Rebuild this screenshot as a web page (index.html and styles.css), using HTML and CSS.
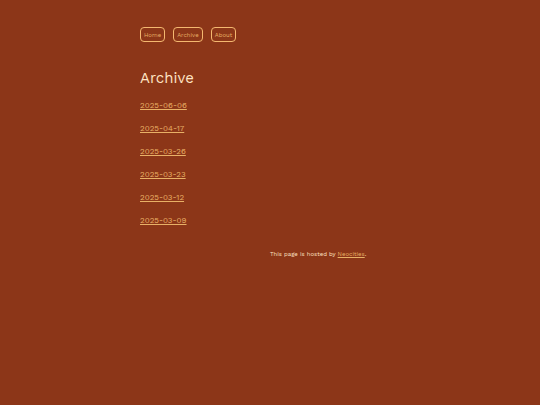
FILE: index.html
```html
<!DOCTYPE html>
<html lang="en">
<head>
    <meta charset="UTF-8">
    <meta name="viewport" content="width=device-width, initial-scale=1.0">
    <title>Archive</title>
    <link rel="stylesheet" href="styles.css">
</head>
<body>
    <div class="container">
        <nav class="menu">
            <a href="index.html">Home</a>
            <a href="archive.html">Archive</a>
            <a href="about.html">About</a>
        </nav>

        <main>
            <h1>Archive</h1>
            <ul class="entries">
                <li><a href="2025-06-06.html">2025-06-06</a></li>
                <li><a href="2025-04-17.html">2025-04-17</a></li>
                <li><a href="2025-03-26.html">2025-03-26</a></li>
                <li><a href="2025-03-23.html">2025-03-23</a></li>
                <li><a href="2025-03-12.html">2025-03-12</a></li>
                <li><a href="2025-03-09.html">2025-03-09</a></li>
            </ul>
        </main>
    </div>

    <footer>This page is hosted by <a href="https://neocities.org">Neocities</a>.</footer>
</body>
</html>
```

FILE: styles.css
```css
body {
    margin: 0;
    padding: 27px 20px;
    background-color: #8c3618;
    color: #ffe4c4;
    font-family: "Work Sans", Inter, sans-serif;
    font-size: 8px;
    font-variant-numeric: lining-nums;
}

a {
    color: #e8b066;
}

.container {
    max-width: 260px;
    margin: 0 auto;
}

.menu {
    display: flex;
    gap: 8px;
}

.menu a {
    padding: 0 3px;
    border: 1px solid #f4b870;
    border-radius: 4px;
    font-size: 6px;
    line-height: 13px;
    text-decoration: none;
}

h1 {
    margin: 26px 0 13px;
    font-size: 15px;
    font-weight: 400;
    line-height: 20px;
}

.entries {
    display: grid;
    gap: 13px;
    margin: 0;
    padding: 0;
    list-style: none;
    line-height: 10px;
}

footer {
    margin: 23px 0 0 50%;
    font-size: 6px;
    line-height: 10px;
}
```
